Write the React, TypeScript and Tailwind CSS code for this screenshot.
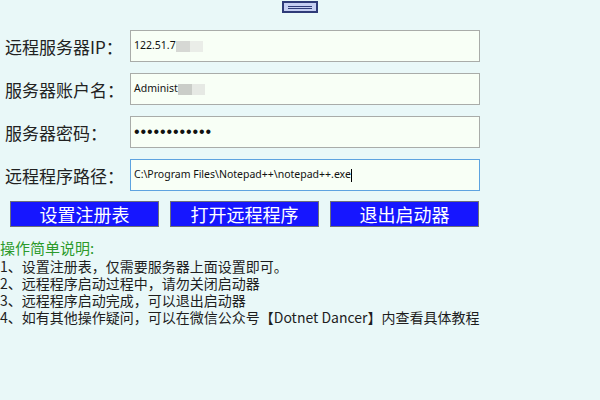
const cjk = "font-['Noto_Sans_CJK_SC',sans-serif]";

function Field({ label, children, focused }: { label: string; children: React.ReactNode; focused?: boolean }) {
  return (
    <div className="flex h-[32px] items-center">
      <div className={`w-[130px] pl-[5px] text-[17px] leading-none text-[#222] ${cjk}`}>{label}</div>
      <div
        className={`flex h-[32px] w-[350px] items-center border bg-[#f8fff6] pl-[3px] font-['Noto_Sans',sans-serif] text-[10.5px] text-[#111] ${
          focused ? "border-[#5ea3e0]" : "border-[#a9aca9]"
        }`}
      >
        {children}
      </div>
    </div>
  );
}

function Blur({ a, b }: { a: string; b: string }) {
  return (
    <span className="flex h-[11px]">
      <span className={`w-[14px] ${a}`} />
      <span className={`w-[13px] ${b}`} />
    </span>
  );
}

export default function App() {
  const tips = [
    "1、设置注册表，仅需要服务器上面设置即可。",
    "2、远程程序启动过程中，请勿关闭启动器",
    "3、远程程序启动完成，可以退出启动器",
    "4、如有其他操作疑问，可以在微信公众号【Dotnet Dancer】内查看具体教程",
  ];

  return (
    <div className="h-[400px] w-[600px] overflow-hidden bg-[#e9f8f8]">
      <div className="flex justify-center pt-[1px]">
        <div className="flex h-[12px] w-[36px] flex-col items-center justify-center gap-[1px] border-2 border-[#2f3b78] bg-[#c6cff2]">
          <span className="h-[1px] w-[24px] bg-[#2f3b78]" />
          <span className="h-[1px] w-[24px] bg-[#2f3b78]" />
        </div>
      </div>

      <div className="mt-[17px] flex flex-col gap-[11px]">
        <Field label="远程服务器IP：">
          <span>122.51.7</span>
          <Blur a="bg-[#d6d8d4]" b="bg-[#eaede8]" />
        </Field>
        <Field label="服务器账户名：">
          <span>Administ</span>
          <Blur a="bg-[#cacdc8]" b="bg-[#e6e9e4]" />
        </Field>
        <Field label="服务器密码：">
          <span className="font-['Liberation_Sans',sans-serif] text-[16px] tracking-[0.9px]">••••••••••••</span>
        </Field>
        <Field label="远程程序路径：" focused>
          <span>C:\Program Files\Notepad++\notepad++.exe</span>
          <span className="h-[13px] w-[1px] bg-black" />
        </Field>
      </div>

      <div className="mt-[10px] flex gap-[11px] pl-[10px]">
        {["设置注册表", "打开远程程序", "退出启动器"].map((t) => (
          <button
            key={t}
            className={`flex h-[26px] w-[149px] items-center justify-center border border-[#6d6f78] bg-[#1616ff] text-[18px] leading-none text-white ${cjk}`}
          >
            {t}
          </button>
        ))}
      </div>

      <div className={`mt-[12px] ${cjk}`}>
        <div className="text-[15px] leading-[18px] text-[#2b9a2b]">操作简单说明:</div>
        <div className="mt-[1px] flex flex-col text-[14px] leading-[17px] text-[#1e1e1e]">
          {tips.map((t) => (
            <div key={t}>{t}</div>
          ))}
        </div>
      </div>
    </div>
  );
}
